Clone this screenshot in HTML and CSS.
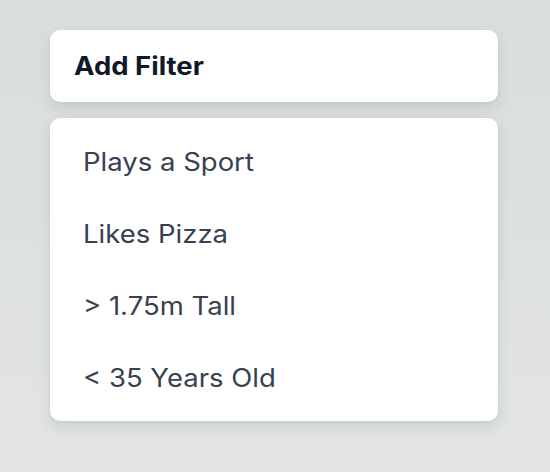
FILE: index.html
```html
<!DOCTYPE html>
<html>
<head>
<meta charset="utf-8">
<link rel="stylesheet" href="styles.css">
</head>
<body>
<div class="wrap">
  <div class="card header"><span class="label">Add Filter</span></div>
  <ul class="card list">
    <li class="item"><span class="label">Plays a Sport</span></li>
    <li class="item"><span class="label">Likes Pizza</span></li>
    <li class="item"><span class="label">&gt; 1.75m Tall</span></li>
    <li class="item"><span class="label">&lt; 35 Years Old</span></li>
  </ul>
</div>
</body>
</html>
```
FILE: styles.css
```css
html, body {
  margin: 0;
  padding: 0;
}
body {
  width: 550px;
  height: 472px;
  background: linear-gradient(180deg, #dadddd 0%, #e2e4e5 100%);
  font-family: Inter, "Noto Sans", sans-serif;
  overflow: hidden;
}
.wrap {
  display: flex;
  flex-direction: column;
  gap: 16px;
  padding: 30px 0 0 50px;
  width: 448px;
}
.card {
  background: #ffffff;
  border-radius: 10px;
  box-shadow: 0 6px 14px rgba(60, 70, 80, 0.12), 0 1px 3px rgba(60, 70, 80, 0.06);
}
.label {
  display: inline-block;
  transform: scaleX(1.1);
  transform-origin: left center;
  white-space: nowrap;
}
.header {
  height: 72px;
  display: flex;
  align-items: center;
  padding: 0 24px;
  font-size: 25px;
  font-weight: 700;
  color: #111827;
}
.list {
  list-style: none;
  margin: 0;
  padding: 8px 0 7px;
}
.item {
  height: 72px;
  display: flex;
  align-items: center;
  padding-left: 33px;
  font-size: 25px;
  color: #374151;
}
```
